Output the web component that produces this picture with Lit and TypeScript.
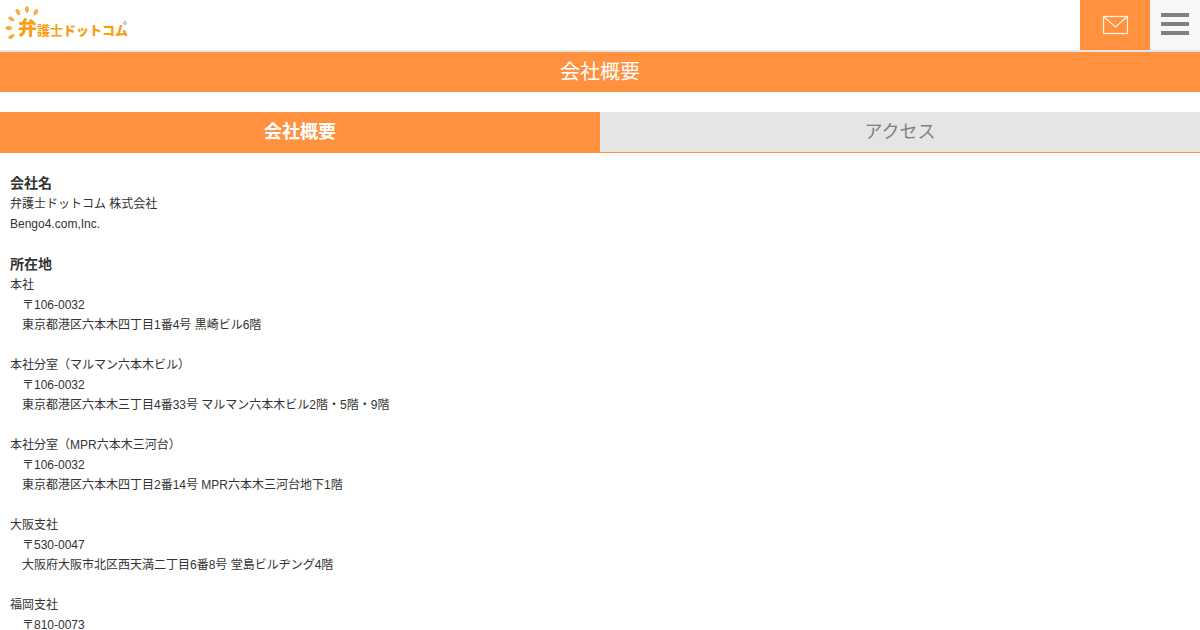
import { LitElement, html, css, svg } from "lit";
import { customElement, state } from "lit/decorators.js";

interface Office {
  name: string;
  lines: string[];
}

const OFFICES: Office[] = [
  { name: "本社", lines: ["〒106-0032", "東京都港区六本木四丁目1番4号 黒崎ビル6階"] },
  {
    name: "本社分室（マルマン六本木ビル）",
    lines: ["〒106-0032", "東京都港区六本木三丁目4番33号 マルマン六本木ビル2階・5階・9階"],
  },
  {
    name: "本社分室（MPR六本木三河台）",
    lines: ["〒106-0032", "東京都港区六本木四丁目2番14号 MPR六本木三河台地下1階"],
  },
  { name: "大阪支社", lines: ["〒530-0047", "大阪府大阪市北区西天満二丁目6番8号 堂島ビルヂング4階"] },
  { name: "福岡支社", lines: ["〒810-0073"] },
];

// Petals of the sun mark: centre x, centre y, rotation in degrees.
const PETALS = [
  [11.5, 36.5, 60],
  [8.8, 28, 92],
  [11.5, 19, 122],
  [18, 12.2, 150],
  [27, 9.6, 180],
  [35.8, 12.2, 205],
];

@customElement("site-header")
export class SiteHeader extends LitElement {
  static styles = css`
    :host {
      display: block;
    }
    .bar {
      display: flex;
      height: 50px;
      border-bottom: 2px solid #e5e5e5;
      background: #fff;
    }
    .logo {
      display: block;
      margin-right: auto;
    }
    .logo svg,
    .action svg {
      display: block;
    }
    .mark {
      fill: #f8ad45;
    }
    .word {
      fill: #f99d12;
      font-family: "Noto Sans CJK JP", sans-serif;
      font-weight: 700;
    }
    .action {
      display: grid;
      place-items: center;
      border: 0;
      padding: 0;
      cursor: pointer;
    }
    .mail {
      width: 70px;
      background: #ff913f;
    }
    .menu {
      width: 50px;
      background: #f7f7f7;
    }
  `;

  render() {
    return html`
      <header class="bar">
        <a class="logo" href="#" aria-label="弁護士ドットコム">
          <svg width="132" height="48" viewBox="0 0 132 48">
            <g class="mark">
              ${PETALS.map(
                ([x, y, r]) => svg`<path
                  d="M0 -3.8C1.4 -2.6 2.2 -.8 2 .8C1.8 2.4 1.1 3.3 0 3.6C-1.1 3.3 -1.8 2.4 -2 .8C-2.2 -.8 -1.4 -2.6 0 -3.8Z"
                  transform="translate(${x} ${y}) rotate(${r})"></path>`
              )}
            </g>
            <g class="word">
              <text x="18" y="35" font-size="19" font-weight="900">弁</text>
              <text x="37" y="35" font-size="13">護士</text>
              <text x="63" y="35" font-size="13" font-weight="900">ドットコム</text>
            </g>
            <circle cx="125" cy="23" r="1.4" fill="none" stroke="#a9ada0" stroke-width="1"></circle>
          </svg>
        </a>
        <button class="action mail" type="button" aria-label="お問い合わせ">
          <svg width="26" height="20" viewBox="0 0 26 20" fill="none" stroke="#fff3dc">
            <rect x="1.5" y="1.5" width="24" height="17" stroke-width="1.3"></rect>
            <path d="M1.5 1.5L13.5 12L25.5 1.5" stroke-width="1.3"></path>
          </svg>
        </button>
        <button class="action menu" type="button" aria-label="メニュー">
          <svg width="28" height="24" viewBox="0 0 28 24" fill="#808080">
            <rect y="0" width="28" height="4"></rect>
            <rect y="9" width="28" height="4"></rect>
            <rect y="18" width="28" height="4"></rect>
          </svg>
        </button>
      </header>
    `;
  }
}

@customElement("app-root")
export class AppRoot extends LitElement {
  @state() private tab = 0;

  static styles = css`
    :host {
      display: block;
      background: #fff;
      color: #333;
      font-family: "Liberation Sans", "Noto Sans CJK JP", sans-serif;
      font-size: 12px;
      line-height: 20px;
    }
    .title {
      margin: 0 0 20px;
      background: #ff913f;
      color: #fff;
      font-size: 20px;
      font-weight: 400;
      line-height: 40px;
      text-align: center;
    }
    .tabs {
      display: flex;
      border-bottom: 1px solid #ff913f;
    }
    .tab {
      flex: 1;
      border: 0;
      padding: 0;
      background: #e5e5e5;
      color: #808080;
      font-family: inherit;
      font-size: 18px;
      line-height: 40px;
      cursor: pointer;
    }
    .tab.active {
      background: #ff913f;
      color: #fff;
      font-weight: 700;
    }
    .content {
      padding: 20px 10px 0;
    }
    .heading {
      margin: 0;
      font-size: 14px;
      line-height: 21px;
    }
    .block {
      margin: 0 0 20px;
    }
    .block:last-child {
      margin-bottom: 0;
    }
    .line {
      margin: 0;
    }
    .address {
      padding-left: 12px;
      font-style: normal;
    }
  `;

  render() {
    const labels = ["会社概要", "アクセス"];
    return html`
      <site-header></site-header>
      <main>
        <h1 class="title">会社概要</h1>
        <div class="tabs" role="tablist">
          ${labels.map(
            (label, i) => html`<button
              class="tab ${this.tab === i ? "active" : ""}"
              type="button"
              role="tab"
              aria-selected=${this.tab === i ? "true" : "false"}
              @click=${() => (this.tab = i)}
            >${label}</button>`
          )}
        </div>
        <div class="content">
          <section class="block">
            <h2 class="heading">会社名</h2>
            <p class="line">弁護士ドットコム 株式会社</p>
            <p class="line">Bengo4.com,Inc.</p>
          </section>
          <section>
            <h2 class="heading">所在地</h2>
            ${OFFICES.map(
              (office) => html`<div class="block">
                <p class="line">${office.name}</p>
                <address class="address">
                  ${office.lines.map((line) => html`<p class="line">${line}</p>`)}
                </address>
              </div>`
            )}
          </section>
        </div>
      </main>
    `;
  }
}
